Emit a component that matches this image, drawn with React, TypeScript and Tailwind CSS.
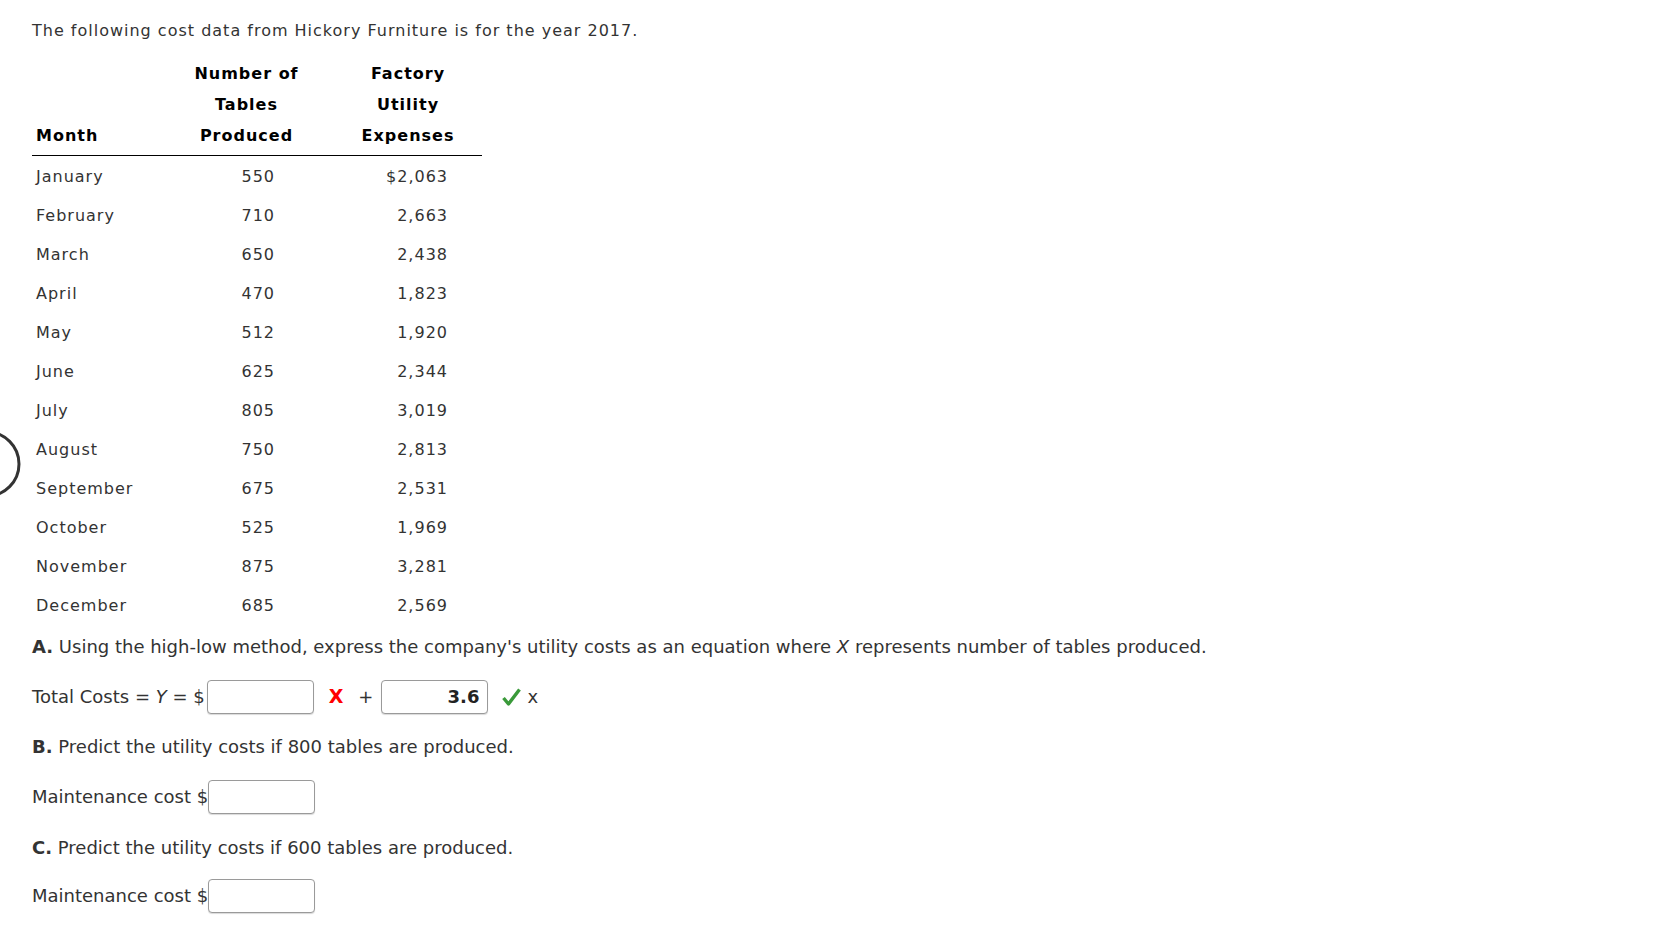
import React from "react";

type Row = { month: string; tables: string; cost: string };

const rows: Row[] = [
  { month: "January", tables: "550", cost: "$2,063" },
  { month: "February", tables: "710", cost: "2,663" },
  { month: "March", tables: "650", cost: "2,438" },
  { month: "April", tables: "470", cost: "1,823" },
  { month: "May", tables: "512", cost: "1,920" },
  { month: "June", tables: "625", cost: "2,344" },
  { month: "July", tables: "805", cost: "3,019" },
  { month: "August", tables: "750", cost: "2,813" },
  { month: "September", tables: "675", cost: "2,531" },
  { month: "October", tables: "525", cost: "1,969" },
  { month: "November", tables: "875", cost: "3,281" },
  { month: "December", tables: "685", cost: "2,569" },
];

const AnswerBox = ({ value, className = "" }: { value?: string; className?: string }) => (
  <div
    className={`flex h-[34px] w-[107px] items-center justify-end rounded-[4px] border border-[#9a9a9a] bg-white px-[8px] font-bold text-[#222] shadow-[0_1px_1px_rgba(0,0,0,0.15)] ${className}`}
  >
    {value}
  </div>
);

const App = () => {
  return (
    <div className="relative min-h-[934px] w-[1660px] bg-white pl-[32px] pt-[19px] text-[#333]">
      {/* part of a circle cut off by the left edge */}
      <svg className="absolute left-0 top-[428px]" width="24" height="72" viewBox="0 0 24 72">
        <circle cx="-13" cy="36" r="32" fill="none" stroke="#333" strokeWidth="3" />
      </svg>

      <div className="text-[16px] tracking-[1px]" style={{ fontFamily: '"DejaVu Sans", Verdana, sans-serif' }}>
        <p className="leading-[24px]">The following cost data from Hickory Furniture is for the year 2017.</p>

        <table className="mt-[15px] w-[450px] border-collapse">
          <thead>
            <tr className="border-b border-black font-bold text-black">
              <th className="w-[133px] pb-[4px] pl-[4px] text-left align-bottom leading-[31px]">Month</th>
              <th className="w-[165px] pb-[4px] pr-[2px] text-center align-bottom leading-[31px]">
                Number of
                <br />
                Tables
                <br />
                Produced
              </th>
              <th className="pb-[4px] pl-[4px] text-center align-bottom leading-[31px]">
                Factory
                <br />
                Utility
                <br />
                Expenses
              </th>
            </tr>
          </thead>
          <tbody>
            {rows.map((r) => (
              <tr key={r.month} className="h-[39px]">
                <td className="pl-[4px] pt-[4px]">{r.month}</td>
                <td className="pr-[55px] pt-[4px] text-right">{r.tables}</td>
                <td className="pr-[34px] pt-[4px] text-right">{r.cost}</td>
              </tr>
            ))}
          </tbody>
        </table>
      </div>

      <div className="text-[18px]" style={{ fontFamily: '"DejaVu Sans", Tahoma, sans-serif' }}>
        <p className="mt-[11px] leading-[24px]">
          <b>A.</b> Using the high-low method, express the company's utility costs as an equation where <i>X</i>{" "}
          represents number of tables produced.
        </p>

        <div className="mt-[21px] flex items-center">
          <span>
            Total Costs = <i>Y</i> = $
          </span>
          <AnswerBox className="ml-[2px]" />
          <span className="ml-[15px] text-[19px] font-bold leading-none text-[#f00]">X</span>
          <span className="ml-[15px] mr-[8px]">+</span>
          <AnswerBox value="3.6" />
          <svg className="ml-[14px]" width="19" height="18" viewBox="0 0 19 18">
            <path d="M1.5 10 L6.5 16 L17.5 1.5" fill="none" stroke="#3a9a3a" strokeWidth="3.4" strokeLinejoin="round" />
          </svg>
          <span className="ml-[6px]">x</span>
        </div>

        <p className="mt-[21px] leading-[24px]">
          <b>B.</b> Predict the utility costs if 800 tables are produced.
        </p>

        <div className="mt-[21px] flex items-center">
          <span>Maintenance cost $</span>
          <AnswerBox />
        </div>

        <p className="mt-[22px] leading-[24px]">
          <b>C.</b> Predict the utility costs if 600 tables are produced.
        </p>

        <div className="mt-[19px] flex items-center">
          <span>Maintenance cost $</span>
          <AnswerBox />
        </div>
      </div>
    </div>
  );
};

export default App;
